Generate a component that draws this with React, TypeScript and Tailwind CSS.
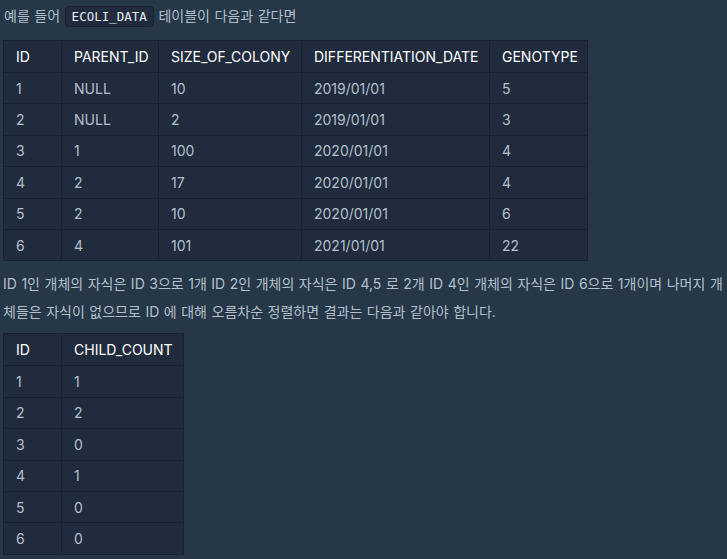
import React from "react";

const rows1 = [
  ["1", "NULL", "10", "2019/01/01", "5"],
  ["2", "NULL", "2", "2019/01/01", "3"],
  ["3", "1", "100", "2020/01/01", "4"],
  ["4", "2", "17", "2020/01/01", "4"],
  ["5", "2", "10", "2020/01/01", "6"],
  ["6", "4", "101", "2021/01/01", "22"],
];
const head1 = ["ID", "PARENT_ID", "SIZE_OF_COLONY", "DIFFERENTIATION_DATE", "GENOTYPE"];
const cols1 = ["w-[58px]", "w-[97px]", "w-[143px]", "w-[188px]", "w-[98px]"];

const rows2 = [
  ["1", "1"],
  ["2", "2"],
  ["3", "0"],
  ["4", "1"],
  ["5", "0"],
  ["6", "0"],
];
const head2 = ["ID", "CHILD_COUNT"];
const cols2 = ["w-[58px]", "w-[122px]"];

function Table({
  head,
  rows,
  cols,
  width,
}: {
  head: string[];
  rows: string[][];
  cols: string[];
  width: string;
}) {
  return (
    <table className={`${width} ml-[3px] table-fixed border-collapse bg-[#202b3d] text-[14px]`}>
      <colgroup>
        {cols.map((c, i) => (
          <col key={i} className={c} />
        ))}
      </colgroup>
      <thead>
        <tr>
          {head.map((h, i) => (
            <th
              key={i}
              className="h-[32px] border border-[#172130] px-3 text-left font-normal whitespace-nowrap text-white"
            >
              {h}
            </th>
          ))}
        </tr>
      </thead>
      <tbody>
        {rows.map((r, ri) => (
          <tr key={ri}>
            {r.map((c, ci) => (
              <td
                key={ci}
                className="h-[31.4px] border border-[#172130] px-3 text-left text-[#b2c0cc]"
              >
                {c}
              </td>
            ))}
          </tr>
        ))}
      </tbody>
    </table>
  );
}

export default function App() {
  return (
    <div className="min-h-[559px] w-[727px] overflow-hidden bg-[#263747] pt-[2px] font-['Inter','Noto_Sans_CJK_KR',sans-serif] text-[#b2c0cc]">
      <p className="pl-[4px] text-[14px] leading-[28px] [word-spacing:0.6px]">
        예를 들어{" "}
        <code className="rounded-[4px] border border-[#172130] bg-[#202b3d] px-[6px] py-[2px] font-['DejaVu_Sans_Mono',monospace] text-[12.5px] text-[#e6ebf0] [word-spacing:0px]">
          ECOLI_DATA
        </code>{" "}
        테이블이 다음과 같다면
      </p>
      <div className="mt-[9px]">
        <Table head={head1} rows={rows1} cols={cols1} width="w-[585px]" />
      </div>
      <p className="mt-[9px] pl-[3px] text-[14px] leading-[28px] [word-spacing:0.6px]">
        ID 1인 개체의 자식은 ID 3으로 1개 ID 2인 개체의 자식은 ID 4,5 로 2개 ID 4인 개체의 자식은 ID 6으로 1개이며 나머지 개체들은 자식이 없으므로 ID 에 대해 오름차순 정렬하면 결과는 다음과 같아야 합니다.
      </p>
      <div className="mt-[7px] pb-[6px]">
        <Table head={head2} rows={rows2} cols={cols2} width="w-[180px]" />
      </div>
    </div>
  );
}
